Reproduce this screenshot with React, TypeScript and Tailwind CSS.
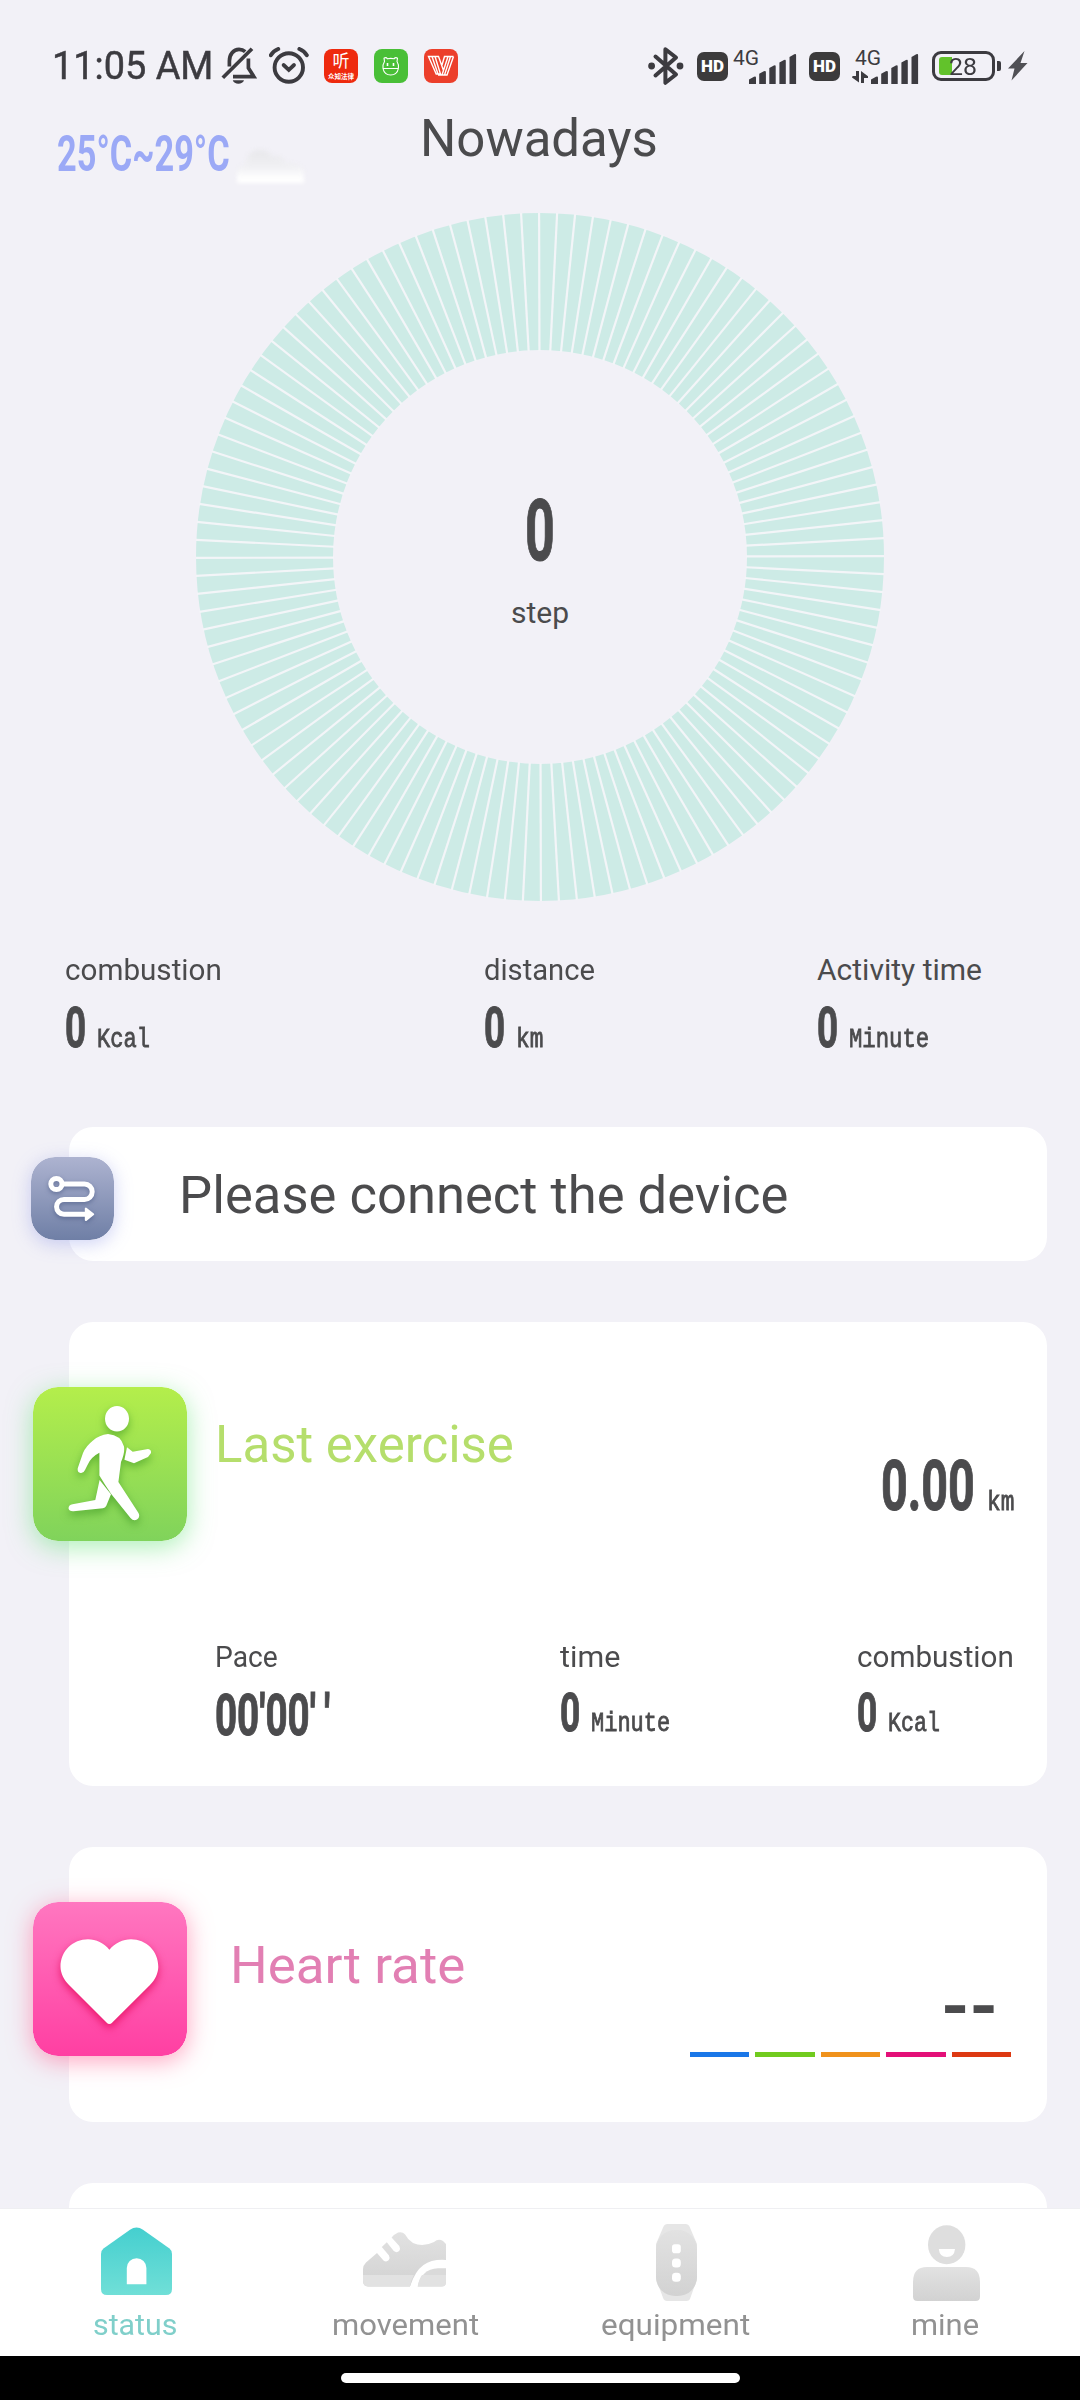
import { useLayoutEffect, useRef, useState, type ReactNode } from "react";

/** One line of text scaled horizontally to the width of its box. */
function Fit({ className = "", children }: { className?: string; children: ReactNode }) {
  const box = useRef<HTMLDivElement>(null);
  const text = useRef<HTMLSpanElement>(null);
  const [scale, setScale] = useState(1);
  useLayoutEffect(() => {
    if (box.current && text.current) {
      setScale(box.current.clientWidth / text.current.offsetWidth);
    }
  }, []);
  return (
    <div ref={box} className={`shrink-0 leading-none ${className}`}>
      <span
        ref={text}
        className="inline-block origin-left whitespace-nowrap"
        style={{ transform: `scaleX(${scale})` }}
      >
        {children}
      </span>
    </div>
  );
}

const MONO = "font-['Liberation_Mono',monospace] text-[27px] [-webkit-text-stroke:0.8px_currentColor]";
const DIGITS = "font-bold [-webkit-text-stroke:1px_currentColor]";

function Metric({
  label,
  labelWidth,
  value,
  valueClass,
  unit,
  unitWidth,
}: {
  label: string;
  labelWidth: string;
  value: ReactNode;
  valueClass: string;
  unit?: string;
  unitWidth?: string;
}) {
  return (
    <div>
      <Fit className={`text-[30px] ${labelWidth}`}>{label}</Fit>
      <div className="mt-[15px] flex items-baseline">
        <Fit className={`${DIGITS} ${valueClass}`}>{value}</Fit>
        {unit && <Fit className={`ml-[11px] ${MONO} ${unitWidth}`}>{unit}</Fit>}
      </div>
    </div>
  );
}

function BellOff() {
  return (
    <svg viewBox="0 0 36 38" className="h-[38px] w-9" fill="none" stroke="#3c3b40" strokeWidth="3.7">
      <path d="M1.8 30.8 31 1.8" />
      <path d="M8.4 19.5V14C8.4 7.5 12.500 2.400 18 2.400c2.600 0 4.600.800 6.200 2.200" />
      <path d="M27.400 11.500V21l5.400 8.600H12" />
      <path d="M11.800 33.200h11.200c-1 4.600-10.200 4.600-11.200 0Z" fill="#3c3b40" stroke="none" />
    </svg>
  );
}

function Alarm() {
  return (
    <svg viewBox="0 0 40 38" className="h-[38px] w-10" fill="none" stroke="#3c3b40" strokeWidth="3.4" strokeLinecap="round">
      <circle cx="19.8" cy="20.5" r="14.2" strokeWidth="3.9" />
      <path d="m14.600 18 5.200 4.800L25 18" strokeWidth="3.800" />
      <path d="M1.800 8.200C3.500 5.400 6 3.300 9.200 2M37.800 8.200C36.100 5.400 33.600 3.300 30.400 2" strokeWidth="4" />
    </svg>
  );
}

function Bluetooth() {
  return (
    <svg viewBox="0 0 36 40" className="h-10 w-9" fill="none" stroke="#3c3b40" strokeWidth="4" strokeLinejoin="round" strokeLinecap="round">
      <path d="m7.500 10.500 20.500 18-10.600 8.300V3.200L28 11.500l-20.500 18" />
      <circle cx="3.600" cy="20" r="3.400" fill="#3c3b40" stroke="none" />
      <circle cx="32" cy="20" r="3.400" fill="#3c3b40" stroke="none" />
    </svg>
  );
}

function Hd() {
  return (
    <div className="flex h-[29px] w-[31px] items-center justify-center rounded-[7px] bg-[#3c3b3c]">
      <Fit className="w-[23px] text-[17px] font-black text-white">HD</Fit>
    </div>
  );
}

function Signal({ arrows }: { arrows?: boolean }) {
  return (
    <div className="relative flex h-[36px] items-end">
      {arrows && (
        <svg viewBox="0 0 16 12" className="absolute bottom-px left-[-3px] h-3 w-4" fill="#3c3b40">
          <path d="M4 0h3v11.500L0 6.500l.600-1.500H4ZM9 12V0l7 5.200V7H12v5Z" />
        </svg>
      )}
      <Fit className="w-[26px] self-start text-[21px]">4G</Fit>
      <svg viewBox="0 0 48 30" className="-ml-[10px] h-[30px] w-12" fill="#3c3b40">
        <path d="M0 25.500 5 22.800q2-.8 2 1V30H0ZM10.200 19.800l4.600-2.500q2.100-.9 2.100.9V30h-6.700ZM20.300 14l4.600-2.500q1.800-.9 1.800.9V30h-6.400ZM30.400 8.400 35 6q1.800-.9 1.800.9V30h-6.400ZM40.500 3 45.300.300q1.800-.9 1.800.9V30h-6.600Z" />
      </svg>
    </div>
  );
}

function StatusBar() {
  return (
    <div className="flex h-[90px] shrink-0 items-center pl-[52px] pt-[42px] text-[#3c3b40]">
      <Fit className="w-[161px] text-[39.5px] [-webkit-text-stroke:0.5px_currentColor]">11:05 AM</Fit>
      <div className="ml-[8px] -mt-px"><BellOff /></div>
      <div className="ml-[12px] -mt-px"><Alarm /></div>
      <div className="ml-[15px] flex h-[34px] w-[34px] flex-col items-center rounded-[8px] bg-[#ee2a0e] font-['Noto_Sans_CJK_SC',sans-serif] text-white">
        <span className="text-[17px] leading-[22px]">听</span>
        <span className="whitespace-nowrap text-[6.5px] font-bold leading-[10px]">众知法律</span>
      </div>
      <svg viewBox="0 0 34 34" className="ml-[16px] h-[34px] w-[34px]" fill="none" stroke="#fff" strokeWidth="1.1">
        <rect width="34" height="34" rx="8" fill="#49bf37" stroke="none" />
        <path d="M10.500 12.500 10 9.200q2-1.400 3.500.6 3.200-.8 6.500 0 1.500-2 3.500-.6l-.5 3.300q2 3 1.400 7-1.400 6.500-7.700 6.500T9 19.500q-.5-4 1.500-7ZM9 19.500h15.400" />
        <path d="M13.500 14v3M19.500 14v3" strokeWidth="1.600" />
      </svg>
      <svg viewBox="0 0 34 34" className="ml-[16px] h-[34px] w-[34px]" fill="none" stroke="#fff" strokeWidth="1.400">
        <rect width="34" height="34" rx="8" fill="#ec3f2b" stroke="none" />
        <path d="M4.500 7.500H11L16.500 25h-4.300ZM8 7.500l6 17.500M11 7.500h3.500l5 14M29.500 7.500H24L18 26M29.500 7.500 23 26h-9M26.500 7.500 20.500 26M24 7.500h-3.500L18 16" />
      </svg>

      <div className="ml-[190px]"><Bluetooth /></div>
      <div className="ml-[13px]"><Hd /></div>
      <div className="ml-[5px] -mt-px"><Signal /></div>
      <div className="ml-[12px]"><Hd /></div>
      <div className="ml-[15px] -mt-px"><Signal arrows /></div>
      <div className="ml-[13px] flex items-center">
        <div className="relative h-[30px] w-[63px] rounded-[9px] border-[3px] border-[#3c3b40]">
          <div className="absolute left-[4px] top-[3px] h-[18px] w-[13px] rounded-l-[3px] bg-[#62c22b]" />
          <Fit className="absolute left-[14px] top-px w-[28px] text-[24px]">28</Fit>
        </div>
        <div className="ml-[2px] h-[10px] w-[4px] rounded-r-[2px] bg-[#3c3b40]" />
      </div>
      <svg viewBox="0 0 20 30" className="ml-[7px] h-[30px] w-5" fill="#505055">
        <path d="M16.500 0 0 17.500h6.500L3.500 29.500 19.500 12H12.500Z" />
      </svg>
    </div>
  );
}

function StepRing() {
  const c = 344;
  const lines = Array.from({ length: 120 }, (_, i) => ((i * 3 - 0.15) * Math.PI) / 180);
  return (
    <svg viewBox="0 0 688 688" className="col-start-1 row-start-1 h-[688px] w-[688px]">
      <circle cx={c} cy={c} r="275.5" fill="none" stroke="#cdebe6" strokeWidth="137" />
      {lines.map((a) => (
        <line
          key={a}
          x1={c + 206 * Math.sin(a)}
          y1={c - 206 * Math.cos(a)}
          x2={c + 345 * Math.sin(a)}
          y2={c - 345 * Math.cos(a)}
          stroke="#f3f5f8"
          strokeWidth="2.2"
        />
      ))}
    </svg>
  );
}

function RouteIcon() {
  return (
    <svg viewBox="0 0 83 83" className="mt-[30px] -ml-[38.500px] h-[83px] w-[83px] shrink-0 rounded-[24px] shadow-[0_4px_18px_rgba(130,140,230,0.38)]">
      <defs>
        <linearGradient id="route" x1="0" y1="0" x2="0" y2="1">
          <stop offset="0" stopColor="#adb3d0" />
          <stop offset="1" stopColor="#6f7fa6" />
        </linearGradient>
      </defs>
      <rect width="83" height="83" rx="24" fill="url(#route)" />
      <g fill="none" stroke="#fff" strokeWidth="5" className="drop-shadow-[0_2px_2px_rgba(60,75,120,0.5)]">
        <circle cx="25.400" cy="27" r="5.600" />
        <path d="M32 27h21.500a7.700 7.700 0 0 1 0 15.400H33a7.400 7.400 0 0 0 0 14.900h22" />
        <path d="M54.800 51.500v11.600l7.400-5.800Z" fill="#fff" strokeWidth="2" strokeLinejoin="round" />
      </g>
    </svg>
  );
}

function RunIcon() {
  return (
    <svg viewBox="0 0 154 154" className="mt-[65px] -ml-9 h-[154px] w-[154px] shrink-0 rounded-[25px] shadow-[0_6px_26px_rgba(90,225,110,0.5)]">
      <defs>
        <linearGradient id="run" x1="0" y1="0" x2="0" y2="1">
          <stop offset="0" stopColor="#b4ee4b" />
          <stop offset="1" stopColor="#80d35b" />
        </linearGradient>
      </defs>
      <rect width="154" height="154" rx="25" fill="url(#run)" />
      <g fill="#fff" className="drop-shadow-[0_4px_4px_rgba(50,140,30,0.55)]">
        <ellipse cx="84" cy="31.800" rx="12" ry="12.800" />
        <path d="M75 47Q66 48 60 53.500 53 59 50 66L44.800 81Q44 85.500 47.500 86q3 .5 4.500-3l2.500-5Q58 70 66.400 65.800V88.500Q72 98 78.200 107l19.300 24q3 3.500 6.500 1.500 3.500-2.500 1.500-6.500L85.400 95 88 75q4-9 3-15.500Q88 48 75 47Z" />
        <path d="m94 60.300 5.700 4.400L115 62q3.500.5 3 4l-3 4-14 6.300-9.600-3.500Z" />
        <path d="m66.600 93 11.400 14.300-4.800 11.700q-1 2-3.300 2.300L40.500 124.300q-4.500.2-5-3 .2-3.500 4-4l22.800-4.300Z" />
      </g>
    </svg>
  );
}

function HeartIcon() {
  return (
    <svg viewBox="0 0 154 154" className="mt-[55px] -ml-9 h-[154px] w-[154px] shrink-0 rounded-[25px] shadow-[0_5px_24px_rgba(255,90,140,0.55)]">
      <defs>
        <linearGradient id="heart" x1="0" y1="0" x2="0" y2="1">
          <stop offset="0" stopColor="#ff77c0" />
          <stop offset="1" stopColor="#ff3fa2" />
        </linearGradient>
      </defs>
      <rect width="154" height="154" rx="25" fill="url(#heart)" />
      <path
        d="M76.400 47.700C71 41 63 37.300 55 37.300 40 37.300 27.500 49 27.500 64.700 27.500 71 31 78 36 83l37.500 37.500q2.900 3 5.800 0L117 83c5-5 8.300-12 8.300-18.300C125.300 49 113 37.300 98 37.300c-8 0-16 3.700-21.600 10.400Z"
        fill="#fff"
        className="drop-shadow-[0_4px_4px_rgba(225,0,80,0.7)]"
      />
    </svg>
  );
}

function GreyGradient({ id }: { id: string }) {
  return (
    <defs>
      <linearGradient id={id} x1="0" y1="0" x2="0" y2="1">
        <stop offset="0" stopColor="#e2e2e2" />
        <stop offset="1" stopColor="#d2d2d2" />
      </linearGradient>
    </defs>
  );
}

const NAV_SVG = "h-[84px] w-[84px]";

function HomeNav() {
  return (
    <svg viewBox="0 0 84 84" className={NAV_SVG}>
      <defs>
        <linearGradient id="home" x1="0" y1="0" x2="0" y2="1">
          <stop offset="0" stopColor="#45cfcf" />
          <stop offset="1" stopColor="#70dfd7" />
        </linearGradient>
      </defs>
      <path d="M8 34q0-3.500 2.500-5.500L37 9.800q6.500-4.500 13 0l26.500 18.700Q79 30.500 79 34v35q0 6-6 6H14q-6 0-6-6Z" fill="url(#home)" />
      <path d="M33.800 64.300V48a9.800 9.800 0 0 1 19.600 0v16.300Z" fill="#fff" />
    </svg>
  );
}

function ShoeNav() {
  return (
    <svg viewBox="0 0 84 84" className={NAV_SVG}>
      <GreyGradient id="shoe" />
      <path
        d="M0 49q0-3.500 3-6.500L14 33l6.500 7.500q3 2 5.300-.5 1.500-2.500 0-4.800L18.800 27l5-4.700 7 8.700q3 2.300 5.300 0 1.700-2.300.2-5L28.600 17.500q3-3.500 6.500-5 4.500-1 7 2Q45 20 50 23q10 4.500 21-1 4.500-3.800 9-1l3 3V40q-14-1-22.500 5T47 66.500H5q-5-.5-5-5.500Z"
        fill="url(#shoe)"
      />
      <path d="M83 48.300V62q0 4.500-4.500 4.500H54.700Q58 49.500 75 48.300Z" fill="#dadada" />
      <path d="M0 55h51q-3 5-4 11.500H5Q0 66 0 61ZM59 55h24v7q0 4.500-4.500 4.500H54.700Q56 59 59 55Z" fill="#e2e2e2" />
    </svg>
  );
}

function WatchNav() {
  return (
    <svg viewBox="0 0 84 84" className={NAV_SVG}>
      <GreyGradient id="watch" />
      <path d="M34 4h19q2.500 0 3.500 2.500L64 24v35l-7 20q-1 2-3.500 2H34q-2.500 0-3.500-2L23 59V24l7.500-17.500Q31.500 4 34 4Z" fill="#e6e6e6" />
      <rect x="23" y="10" width="41" height="66" rx="19" fill="url(#watch)" />
      <g fill="#fff">
        <rect x="39" y="24.200" width="8.800" height="9" rx="2.800" />
        <rect x="39" y="38.500" width="8.800" height="9" rx="3.500" />
        <rect x="39" y="52.800" width="8.800" height="9" rx="3.500" />
      </g>
    </svg>
  );
}

function UserNav() {
  return (
    <svg viewBox="0 0 84 84" className={NAV_SVG}>
      <GreyGradient id="user" />
      <ellipse cx="43.700" cy="24.700" rx="18.700" ry="19.500" fill="#dedede" />
      <path d="M35.800 29H52q-.8 8-8.100 8t-8.100-8Z" fill="#fff" />
      <path d="M10 62q0-15 14-15h39q14 0 14 15v14.500q0 4.500-4.500 4.500h-58Q10 81 10 76.500Z" fill="url(#user)" />
    </svg>
  );
}

const ZONES = ["bg-[#1a77e8]", "bg-[#71cb1f]", "bg-[#f0921c]", "bg-[#e31078]", "bg-[#dd3912]"];

const TABS = [
  { label: "status", width: "w-[84px]", color: "text-[#80cfca]", icon: <HomeNav /> },
  { label: "movement", width: "w-[147px]", color: "text-[#929292]", icon: <ShoeNav /> },
  { label: "equipment", width: "w-[149px]", color: "text-[#929292]", icon: <WatchNav /> },
  { label: "mine", width: "w-[68px]", color: "text-[#929292]", icon: <UserNav /> },
];

export default function App() {
  return (
    <div className="flex h-[2400px] w-[1080px] flex-col overflow-hidden bg-[#f2f1f7] font-[Roboto,sans-serif] text-[#4b4b4d]">
      <main className="flex h-[2208px] shrink-0 flex-col overflow-hidden">
        <StatusBar />

        <header className="flex h-[123px] shrink-0 items-start pl-[57px]">
          <Fit className="mt-[39px] w-[173px] text-[50px] font-bold text-[#9ba9f6]">25°C~29°C</Fit>
          <svg viewBox="0 0 76 50" className="ml-[4px] mt-[47px] h-[50px] w-[76px]">
            <defs>
              <linearGradient id="cloud" x1="0" y1="0" x2="0" y2="1">
                <stop offset="0" stopColor="#e8e8eb" />
                <stop offset="0.5" stopColor="#f0f0f3" />
                <stop offset="0.75" stopColor="#fafafb" />
                <stop offset="0.9" stopColor="#ffffff" />
              </linearGradient>
            </defs>
            <path
              d="M3 46V38q0-9 9-11 1-14 14-14 9 0 13 7 9-3 12 5 18 1 19 11v10Z"
              fill="url(#cloud)"
              className="blur-[2px]"
            />
          </svg>
          <Fit className="ml-[110px] mt-[23px] w-[238px] text-[52px]">Nowadays</Fit>
        </header>

        <section className="grid shrink-0 justify-center">
          <StepRing />
          <div className="col-start-1 row-start-1 flex flex-col items-center pt-[276px]">
            <Fit className={`w-[30px] text-[85px] ${DIGITS}`}>0</Fit>
            <Fit className="mt-[24px] w-[58px] text-[30px]">step</Fit>
          </div>
        </section>

        <section className="grid h-[226px] shrink-0 grid-cols-[419px_333px_1fr] pl-[65px] pt-[54px]">
          <Metric label="combustion" labelWidth="w-[157px]" value="0" valueClass="w-[21px] text-[56px]" unit="Kcal" unitWidth="w-[53px]" />
          <Metric label="distance" labelWidth="w-[111px]" value="0" valueClass="w-[21px] text-[56px]" unit="km" unitWidth="w-[27px]" />
          <Metric label="Activity time" labelWidth="w-[165px]" value="0" valueClass="w-[21px] text-[56px]" unit="Minute" unitWidth="w-[80px]" />
        </section>

        <div className="ml-[69px] flex w-[978px] shrink-0 flex-col gap-[61px]">
          <section className="flex h-[134px] rounded-[24px] bg-white">
            <RouteIcon />
            <Fit className="ml-[65px] mt-[43px] w-[609px] text-[51px]">Please connect the device</Fit>
          </section>

          <section className="flex h-[464px] rounded-[24px] bg-white">
            <RunIcon />
            <div className="ml-[28px] flex-1">
              <div className="flex items-start justify-between pr-[33px]">
                <Fit className="mt-[97px] w-[299px] text-[52px] text-[#b5de6c]">Last exercise</Fit>
                <div className="mt-[128px] flex items-baseline">
                  <Fit className={`w-[94px] text-[71px] ${DIGITS}`}>0.00</Fit>
                  <Fit className={`ml-[12px] w-[27px] ${MONO}`}>km</Fit>
                </div>
              </div>
              <div className="mt-[121px] grid grid-cols-[345px_297px_1fr]">
                <Metric
                  label="Pace"
                  labelWidth="w-[63px]"
                  value={<>00'00'<span className="ml-[12px]">'</span></>}
                  valueClass="w-[115px] text-[57px]"
                />
                <Metric label="time" labelWidth="w-[60px]" value="0" valueClass="w-[20px] text-[53px]" unit="Minute" unitWidth="w-[79px]" />
                <Metric label="combustion" labelWidth="w-[157px]" value="0" valueClass="w-[20px] text-[53px]" unit="Kcal" unitWidth="w-[52px]" />
              </div>
            </div>
          </section>

          <section className="flex h-[275px] rounded-[24px] bg-white">
            <HeartIcon />
            <Fit className="ml-[43px] mt-[93px] w-[235px] text-[52px] text-[#e27fb3]">Heart rate</Fit>
            <div className="ml-auto mr-[36px] mt-[125px] flex w-[321px] flex-col items-end">
              <Fit className="mr-[13px] w-[57px] text-[70px] font-bold">--</Fit>
              <div className="mt-[10px] flex w-full gap-[6px]">
                {ZONES.map((zone) => (
                  <div key={zone} className={`h-[5px] flex-1 ${zone}`} />
                ))}
              </div>
            </div>
          </section>

          <section className="h-[200px] rounded-[24px] bg-white" />
        </div>
      </main>

      <nav className="grid h-[148px] shrink-0 grid-cols-4 border-t border-[#efeff2] bg-white pt-[11px]">
        {TABS.map((tab) => (
          <div key={tab.label} className={`flex flex-col items-center ${tab.color}`}>
            {tab.icon}
            <Fit className={`mt-[6px] text-[30px] ${tab.width}`}>{tab.label}</Fit>
          </div>
        ))}
      </nav>

      <div className="flex h-[44px] shrink-0 justify-center bg-black pt-[17px]">
        <div className="h-[10px] w-[399px] rounded-full bg-white" />
      </div>
    </div>
  );
}
